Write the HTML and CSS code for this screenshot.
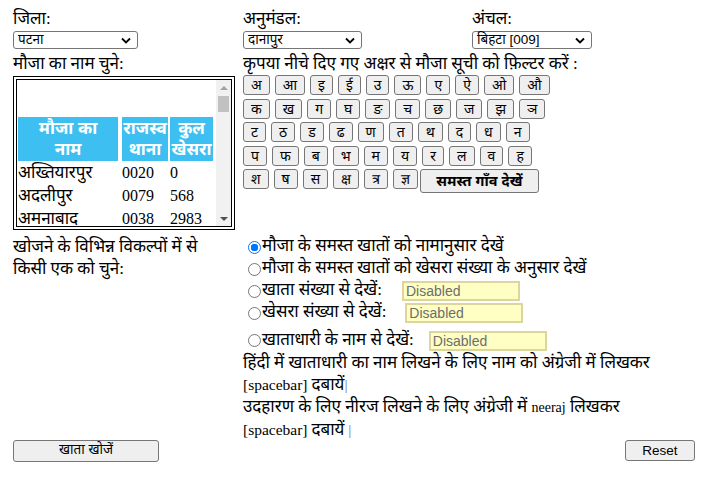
FILE: index.html
```html
<!DOCTYPE html>
<html>
<head>
<meta charset="utf-8">
<link rel="stylesheet" href="styles.css">
</head>
<body>
<div class="page">
  <div class="top">
    <div class="field">
      <div class="lbl">जिला:</div>
      <div class="sel w124"><span>पटना</span><svg class="chev" viewBox="0 0 10 6"><path d="M1 1l4 4 4-4" fill="none" stroke="#000" stroke-width="1.8"/></svg></div>
    </div>
    <div class="field">
      <div class="lbl">अनुमंडल:</div>
      <div class="sel w118"><span>दानापुर</span><svg class="chev" viewBox="0 0 10 6"><path d="M1 1l4 4 4-4" fill="none" stroke="#000" stroke-width="1.8"/></svg></div>
    </div>
    <div class="field">
      <div class="lbl">अंचल:</div>
      <div class="sel w119"><span>बिहटा [009]</span><svg class="chev" viewBox="0 0 10 6"><path d="M1 1l4 4 4-4" fill="none" stroke="#000" stroke-width="1.8"/></svg></div>
    </div>
  </div>

  <div class="main">
    <div class="lbl">मौजा का नाम चुने:</div>
    <div class="lbl">कृपया नीचे दिए गए अक्षर से मौजा सूची को फ़िल्टर करें :</div>

    <div class="listbox">
      <div class="listcontent">
        <table class="mauza">
          <thead>
            <tr><th class="c1">मौजा का<br>नाम</th><th class="c2">राजस्व<br>थाना</th><th class="c3">कुल<br>खेसरा</th></tr>
          </thead>
          <tbody>
            <tr><td class="name">अख्तियारपुर</td><td>0020</td><td>0</td></tr>
            <tr><td class="name">अदलीपुर</td><td>0079</td><td>568</td></tr>
            <tr><td class="name">अमनाबाद</td><td>0038</td><td>2983</td></tr>
          </tbody>
        </table>
      </div>
      <div class="vscroll">
        <div class="arrow up"></div>
        <div class="track"><div class="thumb"></div></div>
        <div class="arrow down"></div>
      </div>
    </div>

    <div class="letters">
      <div class="lrow"><button>अ</button><button>आ</button><button>इ</button><button>ई</button><button>उ</button><button>ऊ</button><button>ए</button><button>ऐ</button><button>ओ</button><button>औ</button></div>
      <div class="lrow"><button>क</button><button>ख</button><button>ग</button><button>घ</button><button>ङ</button><button>च</button><button>छ</button><button>ज</button><button>झ</button><button>ञ</button></div>
      <div class="lrow"><button>ट</button><button>ठ</button><button>ड</button><button>ढ</button><button>ण</button><button>त</button><button>थ</button><button>द</button><button>ध</button><button>न</button></div>
      <div class="lrow"><button>प</button><button>फ</button><button>ब</button><button>भ</button><button>म</button><button>य</button><button>र</button><button>ल</button><button>व</button><button>ह</button></div>
      <div class="lrow"><button>श</button><button>ष</button><button>स</button><button>क्ष</button><button>त्र</button><button>ज्ञ</button><button class="all">समस्त गाँव देखें</button></div>
    </div>

    <div class="lbl opts">खोजने के विभिन्न विकल्पों में से किसी एक को चुने:</div>

    <div class="radios">
      <div class="ropt"><span class="radio on"></span>मौजा के समस्त खातों को नामानुसार देखें</div>
      <div class="ropt"><span class="radio"></span>मौजा के समस्त खातों को खेसरा संख्या के अनुसार देखें</div>
      <div class="ropt"><span class="radio"></span>खाता संख्या से देखें:<span class="dis d1">Disabled</span></div>
      <div class="ropt"><span class="radio"></span>खेसरा संख्या से देखें:<span class="dis d2">Disabled</span></div>
      <div class="ropt r5"><span class="radio"></span>खाताधारी के नाम से देखें:<span class="dis d3">Disabled</span></div>
      <div class="help">
        <div class="hl">हिंदी में खाताधारी का नाम लिखने के लिए नाम को अंग्रेजी में लिखकर</div>
        <div class="hs">[spacebar] <span class="hi">दबायें</span><span class="bar">|</span></div>
        <div class="hl">उदहारण के लिए नीरज लिखने के लिए अंग्रेजी में <span class="en">neeraj</span> लिखकर</div>
        <div class="hs">[spacebar] <span class="hi">दबायें</span> <span class="bar">|</span></div>
      </div>
    </div>
  </div>

  <div class="actions">
    <button class="btn search">खाता खोजें</button>
    <button class="btn reset">Reset</button>
  </div>
</div>
</body>
</html>
```

FILE: styles.css
```css
html, body {
  margin: 0;
  padding: 0;
  background: #fff;
}
body {
  font-family: "Liberation Serif", "Noto Sans Devanagari", "Lohit Devanagari", "Noto Serif Devanagari", serif;
  font-size: 17px;
  color: #000;
}
.page {
  padding: 8px 13px 0 13px;
  width: 682px;
}
.top {
  display: grid;
  grid-template-columns: 230px 229px 1fr;
}
.lbl {
  font-size: 17px;
  line-height: 22px;
  height: 22px;
  white-space: nowrap;
}
.sel {
  box-sizing: border-box;
  height: 18px;
  border: 1px solid #767676;
  border-radius: 3px;
  display: flex;
  align-items: center;
  justify-content: space-between;
  padding: 0 6px 0 4px;
  font-family: "Liberation Sans", "Noto Sans Devanagari", sans-serif;
  font-size: 13.5px;
  background: #fff;
  margin-top: 1px;
}
.sel span { line-height: 16px; }
.chev { width: 10px; height: 7px; }
.w124 { width: 125px; }
.w118 { width: 119px; }
.w119 { width: 120px; }

.main {
  display: grid;
  grid-template-columns: 230px 1fr;
  margin-top: 4px;
}
.listbox {
  box-sizing: border-box;
  width: 222px;
  height: 154px;
  border: 4px double #000;
  display: flex;
  margin-top: 1px;
}
.listcontent {
  flex: 1;
  overflow: hidden;
  padding: 37px 0 0 0;
}
.mauza {
  border-collapse: separate;
  border-spacing: 2px 0;
  margin-left: -1px;
}
.mauza th {
  background: #3dbff2;
  color: #fff;
  font-weight: bold;
  font-size: 17px;
  line-height: 21px;
  height: 44px;
  padding: 0;
  text-align: center;
  font-family: "Liberation Sans", "Noto Sans Devanagari", sans-serif;
}
.mauza .c1 { width: 100px; border-right: 2px solid #fff; }
.mauza .c2 { width: 46px; }
.mauza .c3 { width: 43px; }
.mauza td {
  height: 23px;
  padding: 0;
  font-size: 16px;
  line-height: 21px;
  white-space: nowrap;
}
.mauza td.name { font-size: 17px; }
.vscroll {
  width: 15px;
  background: #f1f1f1;
  display: flex;
  flex-direction: column;
}
.arrow {
  height: 15px;
  display: flex;
  align-items: center;
  justify-content: center;
}
.arrow::before {
  content: "";
  border-left: 4px solid transparent;
  border-right: 4px solid transparent;
}
.arrow.up::before { border-bottom: 4px solid #a3a3a3; }
.arrow.down::before { border-top: 4px solid #505050; }
.track { flex: 1; padding: 1px 2px; }
.thumb {
  height: 16px;
  background: #c1c1c1;
}

.letters {
  display: flex;
  flex-direction: column;
  gap: 3.5px;
}
.lrow {
  display: flex;
  gap: 5px;
}
.lrow button {
  box-sizing: border-box;
  height: 20px;
  min-width: 22px;
  padding: 0 7px;
  border: 1px solid #767676;
  border-radius: 3px;
  background: #efefef;
  font-family: "Liberation Sans", "Noto Sans Devanagari", sans-serif;
  font-size: 14px;
  line-height: 18px;
  color: #000;
}
.lrow button.all {
  height: 24px;
  padding: 0 8px;
  font-size: 14.5px;
  font-weight: bold;
  width: 119px;
  margin-left: -3px;
}

.opts {
  white-space: normal;
  height: auto;
  width: 200px;
  margin-top: 6px;
}
.radios {
  margin-top: 6px;
}
.ropt {
  display: flex;
  align-items: center;
  height: 22px;
  font-size: 17px;
  white-space: nowrap;
}
.radio {
  box-sizing: border-box;
  width: 13px;
  height: 13px;
  border: 1px solid #767676;
  border-radius: 50%;
  margin: 0 1px 0 5px;
  background: #fff;
  flex: none;
}
.radio.on {
  border: 1px solid #0075ff;
  background: radial-gradient(circle, #0075ff 0 3.5px, #fff 4px 100%);
}
.dis {
  box-sizing: border-box;
  width: 118px;
  height: 20px;
  background: #ffffc4;
  border: 2px solid #dcd69e;
  color: #6d6d6d;
  font-family: "Liberation Sans", sans-serif;
  font-size: 14px;
  line-height: 16px;
  padding-left: 2px;
}
.d1 { margin-left: 20px; }
.d2 { margin-left: 19px; }
.d3 { margin-left: 15px; }
.ropt.r5 { margin-top: 5px; height: 23px; }
.help { margin-top: 0; }
.hl { font-size: 17px; line-height: 22px; white-space: nowrap; }
.hs { font-size: 15.5px; line-height: 22px; }
.hi { font-size: 17px; }
.en { font-size: 14px; }
.bar { color: #7070c0; font-weight: normal; }

.actions {
  display: flex;
  justify-content: space-between;
  margin-top: -1px;
}
.btn {
  box-sizing: border-box;
  height: 22px;
  border: 1px solid #767676;
  border-radius: 3px;
  background: #efefef;
  font-family: "Liberation Sans", "Noto Sans Devanagari", sans-serif;
  font-size: 13.5px;
  color: #000;
}
.btn.search { width: 146px; }
.btn.reset { width: 70px; height: 21px; }
```
